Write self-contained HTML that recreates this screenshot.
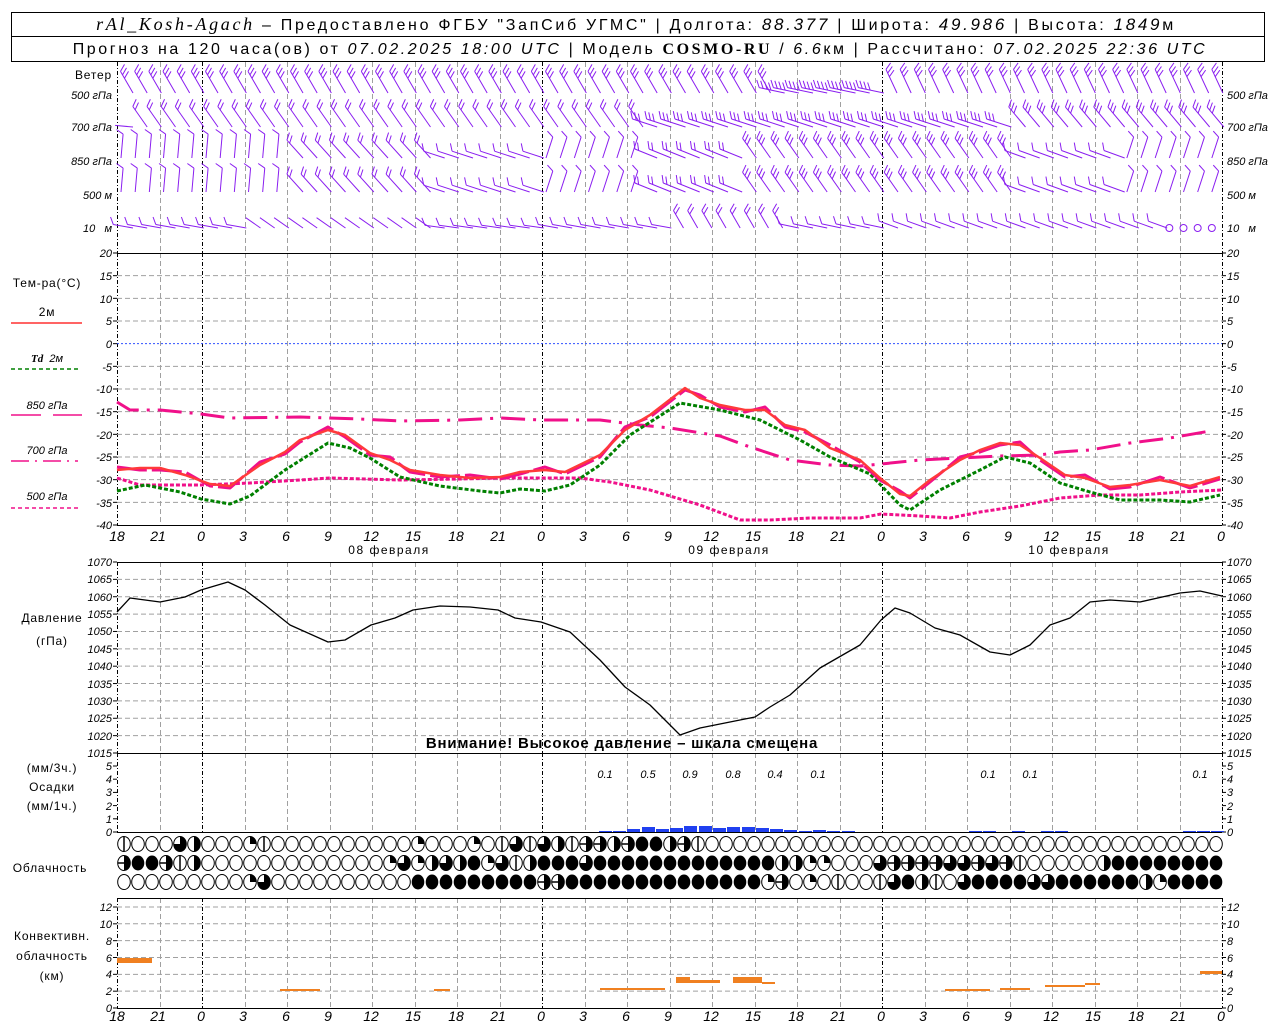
<!DOCTYPE html>
<html><head><meta charset="utf-8">
<style>
html,body{margin:0;padding:0;background:#fff;}
svg{display:block;font-family:"Liberation Sans",sans-serif;}
.t{font-size:12px;fill:#000;letter-spacing:0.8px}
.it{font-style:italic;font-size:11px;fill:#000}
.xl{font-style:italic;font-size:14px;fill:#000;text-anchor:middle}
.l{text-anchor:end}
.h{font-size:16px;fill:#000;letter-spacing:2.7px}
</style></head><body>
<svg id="s" width="1280" height="1024" viewBox="0 0 1280 1024" xmlns="http://www.w3.org/2000/svg">
<rect x="0" y="0" width="1280" height="1024" fill="#fff"/>
<g id="g"></g>
<rect x="11.5" y="12.5" width="1253" height="49" fill="none" stroke="#000"/>
<line x1="11" y1="36.5" x2="1265" y2="36.5" stroke="#000"/>
<text x="636" y="30" class="h" text-anchor="middle"><tspan font-family="Liberation Serif" font-style="italic" font-size="18">rAl_Kosh-Agach</tspan> – Предоставлено ФГБУ "ЗапСиб УГМС" | Долгота: <tspan font-style="italic" font-size="17">88.377</tspan> | Широта: <tspan font-style="italic" font-size="17">49.986</tspan> | Высота: <tspan font-style="italic" font-size="17">1849</tspan>м</text>
<text x="640" y="54" class="h" text-anchor="middle" font-size="15" style="letter-spacing:2.6px">Прогноз на 120 часа(ов) от <tspan font-style="italic">07.02.2025 18:00 UTC</tspan> | Модель <tspan font-family="Liberation Serif" font-weight="bold">COSMO-RU</tspan> / <tspan font-style="italic">6.6</tspan>км | Рассчитано: <tspan font-style="italic">07.02.2025 22:36 UTC</tspan></text>

<text x="112" y="79" class="t l">Ветер</text>
<text x="112" y="99" class="it l">500 гПа</text>
<text x="112" y="131" class="it l">700 гПа</text>
<text x="112" y="165" class="it l">850 гПа</text>
<text x="112" y="199" class="it l">500 м</text>
<text x="112" y="232" class="it l">10 &#160; м</text>
<text x="1227" y="99" class="it">500 гПа</text>
<text x="1227" y="131" class="it">700 гПа</text>
<text x="1227" y="165" class="it">850 гПа</text>
<text x="1227" y="199" class="it">500 м</text>
<text x="1227" y="232" class="it">10 &#160; м</text>

<text x="47" y="287" class="t" text-anchor="middle" font-size="13">Тем-ра(°С)</text>
<text x="47" y="316" class="t" text-anchor="middle">2м</text>
<line x1="11" y1="323" x2="82" y2="323" stroke="#ff3030" stroke-width="1.5"/>
<text x="47" y="362" class="it" text-anchor="middle"><tspan font-family="Liberation Serif" font-weight="bold">Td</tspan> &#160;2м</text>
<line x1="11" y1="369" x2="80" y2="369" stroke="#008000" stroke-width="1.5" stroke-dasharray="4,3"/>
<text x="47" y="409" class="it" text-anchor="middle">850 гПа</text>
<line x1="11" y1="415" x2="82" y2="415" stroke="#f0108a" stroke-width="1.5" stroke-dasharray="30,12"/>
<text x="47" y="454" class="it" text-anchor="middle">700 гПа</text>
<line x1="11" y1="461" x2="78" y2="461" stroke="#f0108a" stroke-width="1.5" stroke-dasharray="18,6,2,6"/>
<text x="47" y="500" class="it" text-anchor="middle">500 гПа</text>
<line x1="11" y1="508" x2="78" y2="508" stroke="#f0108a" stroke-width="1.5" stroke-dasharray="4,3"/>

<g class="it">
<text x="112" y="257" class="l">20</text><text x="112" y="280" class="l">15</text><text x="112" y="303" class="l">10</text><text x="112" y="325" class="l">5</text><text x="112" y="348" class="l">0</text><text x="112" y="371" class="l">-5</text><text x="112" y="393" class="l">-10</text><text x="112" y="416" class="l">-15</text><text x="112" y="439" class="l">-20</text><text x="112" y="461" class="l">-25</text><text x="112" y="484" class="l">-30</text><text x="112" y="507" class="l">-35</text><text x="112" y="529" class="l">-40</text>
<text x="1227" y="257">20</text><text x="1227" y="280">15</text><text x="1227" y="303">10</text><text x="1227" y="325">5</text><text x="1227" y="348">0</text><text x="1227" y="371">-5</text><text x="1227" y="393">-10</text><text x="1227" y="416">-15</text><text x="1227" y="439">-20</text><text x="1227" y="461">-25</text><text x="1227" y="484">-30</text><text x="1227" y="507">-35</text><text x="1227" y="529">-40</text>
</g>
<g class="xl">
<text x="117" y="541">18</text><text x="158" y="541">21</text><text x="201" y="541">0</text><text x="243" y="541">3</text><text x="286" y="541">6</text><text x="328" y="541">9</text><text x="371" y="541">12</text><text x="413" y="541">15</text><text x="456" y="541">18</text><text x="498" y="541">21</text><text x="541" y="541">0</text><text x="583" y="541">3</text><text x="626" y="541">6</text><text x="668" y="541">9</text><text x="711" y="541">12</text><text x="753" y="541">15</text><text x="796" y="541">18</text><text x="838" y="541">21</text><text x="881" y="541">0</text><text x="923" y="541">3</text><text x="966" y="541">6</text><text x="1008" y="541">9</text><text x="1051" y="541">12</text><text x="1093" y="541">15</text><text x="1136" y="541">18</text><text x="1178" y="541">21</text><text x="1221" y="541">0</text>
</g>
<text x="389" y="554" class="t" text-anchor="middle" style="letter-spacing:1.5px">08 февраля</text>
<text x="729" y="554" class="t" text-anchor="middle" style="letter-spacing:1.5px">09 февраля</text>
<text x="1069" y="554" class="t" text-anchor="middle" style="letter-spacing:1.5px">10 февраля</text>

<text x="52" y="622" class="t" text-anchor="middle">Давление</text>
<text x="52" y="645" class="t" text-anchor="middle">(гПа)</text>
<g class="it" font-size="10">
<text x="112" y="566" class="l">1070</text><text x="112" y="583" class="l">1065</text><text x="112" y="601" class="l">1060</text><text x="112" y="618" class="l">1055</text><text x="112" y="635" class="l">1050</text><text x="112" y="653" class="l">1045</text><text x="112" y="670" class="l">1040</text><text x="112" y="688" class="l">1035</text><text x="112" y="705" class="l">1030</text><text x="112" y="722" class="l">1025</text><text x="112" y="740" class="l">1020</text><text x="112" y="757" class="l">1015</text>
<text x="1227" y="566">1070</text><text x="1227" y="583">1065</text><text x="1227" y="601">1060</text><text x="1227" y="618">1055</text><text x="1227" y="635">1050</text><text x="1227" y="653">1045</text><text x="1227" y="670">1040</text><text x="1227" y="688">1035</text><text x="1227" y="705">1030</text><text x="1227" y="722">1025</text><text x="1227" y="740">1020</text><text x="1227" y="757">1015</text>
</g>
<text x="622" y="748" font-size="15" font-weight="bold" text-anchor="middle" fill="#000" style="letter-spacing:0.8px">Внимание! Высокое давление – шкала смещена</text>

<text x="52" y="772" class="t" text-anchor="middle">(мм/3ч.)</text>
<text x="52" y="791" class="t" text-anchor="middle">Осадки</text>
<text x="52" y="810" class="t" text-anchor="middle">(мм/1ч.)</text>
<g class="it" font-size="10">
<text x="112" y="770" class="l">5</text><text x="112" y="783" class="l">4</text><text x="112" y="796" class="l">3</text><text x="112" y="810" class="l">2</text><text x="112" y="823" class="l">1</text><text x="112" y="836" class="l">0</text>
<text x="1227" y="770">5</text><text x="1227" y="783">4</text><text x="1227" y="796">3</text><text x="1227" y="810">2</text><text x="1227" y="823">1</text><text x="1227" y="836">0</text>
</g>
<g class="it" font-size="13" text-anchor="middle">
<text x="605" y="778">0.1</text><text x="648" y="778">0.5</text><text x="690" y="778">0.9</text><text x="733" y="778">0.8</text><text x="775" y="778">0.4</text><text x="818" y="778">0.1</text><text x="988" y="778">0.1</text><text x="1030" y="778">0.1</text><text x="1200" y="778">0.1</text>
</g>
<text x="50" y="872" class="t" text-anchor="middle">Облачность</text>

<text x="52" y="940" class="t" text-anchor="middle">Конвективн.</text>
<text x="52" y="960" class="t" text-anchor="middle">облачность</text>
<text x="52" y="980" class="t" text-anchor="middle">(км)</text>
<g class="it" font-size="10">
<text x="112" y="911" class="l">12</text><text x="112" y="928" class="l">10</text><text x="112" y="945" class="l">8</text><text x="112" y="962" class="l">6</text><text x="112" y="978" class="l">4</text><text x="112" y="995" class="l">2</text><text x="112" y="1012" class="l">0</text>
<text x="1227" y="911">12</text><text x="1227" y="928">10</text><text x="1227" y="945">8</text><text x="1227" y="962">6</text><text x="1227" y="978">4</text><text x="1227" y="995">2</text><text x="1227" y="1012">0</text>
</g>
<g class="xl">
<text x="117" y="1021">18</text><text x="158" y="1021">21</text><text x="201" y="1021">0</text><text x="243" y="1021">3</text><text x="286" y="1021">6</text><text x="328" y="1021">9</text><text x="371" y="1021">12</text><text x="413" y="1021">15</text><text x="456" y="1021">18</text><text x="498" y="1021">21</text><text x="541" y="1021">0</text><text x="583" y="1021">3</text><text x="626" y="1021">6</text><text x="668" y="1021">9</text><text x="711" y="1021">12</text><text x="753" y="1021">15</text><text x="796" y="1021">18</text><text x="838" y="1021">21</text><text x="881" y="1021">0</text><text x="923" y="1021">3</text><text x="966" y="1021">6</text><text x="1008" y="1021">9</text><text x="1051" y="1021">12</text><text x="1093" y="1021">15</text><text x="1136" y="1021">18</text><text x="1178" y="1021">21</text><text x="1221" y="1021">0</text>
</g>
</svg>
<script>
(function(){
var NS="http://www.w3.org/2000/svg",g=document.getElementById("g");
function el(n,a){var e=document.createElementNS(NS,n);for(var k in a)e.setAttribute(k,a[k]);g.appendChild(e);return e;}
function line(x1,y1,x2,y2,c,w,d){var a={x1:x1,y1:y1,x2:x2,y2:y2,stroke:c,"stroke-width":w||1};if(d)a["stroke-dasharray"]=d;return el("line",a);}
var X0=117,X1=1222,DX=(X1-X0)/78;
function X(h){return X0+h*DX;}
var panels=[[62,253],[253,525],[562,753],[753,832],[898,1008]];
for(var i=0;i<=26;i++){var x=Math.round(X(i*3))+0.5;var day=(i%8==2)||i==0||i==26;
 panels.forEach(function(p){line(x,p[0],x,p[1],day?"#000":"#a0a0a0",1,day?"4,2,1,2":"5,3");});}
for(var v=15;v>=-35;v-=5){var y=253+(20-v)*4.533;line(117,y,1222,y,v==0?"#3050ff":"#a0a0a0",1,v==0?"2,2":"5,3");}
for(var v=1065;v>=1020;v-=5){var y=562+(1070-v)*3.4727;line(117,y,1222,y,"#a0a0a0",1,"5,3");}
for(var v=2;v<=12;v+=2){var y=1008-v*8.42;line(117,y,1222,y,"#a0a0a0",1,"5,3");}
function ticks(y0,y1,n){for(var i=0;i<=n;i++){var y=y0+(y1-y0)*i/n;line(113,y,117,y,"#000");line(1222,y,1226,y,"#000");}}
ticks(253,525,12);ticks(562,753,11);ticks(766,832,5);ticks(907,1008,6);
[253.5,525.5,562.5,753.5,832.5,898.5,1008.5].forEach(function(y){line(117,y,1222,y,"#000",1);});
function poly(pts,c,w,d){var a={points:pts.map(function(p){return p.join(",")}).join(" "),fill:"none",stroke:c,"stroke-width":w,"stroke-linejoin":"round"};if(d)a["stroke-dasharray"]=d;return el("polyline",a);}
var red=[[117,470],[140,468],[160,468],[185,475],[210,484],[230,486],[260,465],[285,452],[300,440],[328,430],[345,435],[370,453],[390,460],[410,470],[440,475],[470,478],[500,477],[520,472],[545,470],[565,472],[600,455],[625,430],[650,415],[685,388],[700,398],[720,405],[745,410],[765,410],[785,425],[805,430],[830,448],[860,460],[880,478],[900,494],[910,496],[930,480],[960,460],[980,450],[1000,443],[1020,445],[1040,458],[1065,475],[1085,478],[1110,487],[1130,485],[1160,480],[1190,486],[1220,477]];
var p700=red.map(function(p,i){return [p[0],p[1]+(i%3==0?-3:2)];});
poly([[117,402],[130,410],[160,410],[201,414],[230,418],[300,417],[360,419],[400,421],[460,420],[500,418],[541,420],[600,420],[640,425],[670,428],[720,436],[750,447],[790,460],[830,465],[860,466],[881,464],[920,460],[960,458],[1000,456],[1040,455],[1060,452],[1090,450],[1130,443],[1170,438],[1210,431]],"#f0108a",3,"24,8,3,8");
poly([[117,478],[140,485],[201,485],[250,483],[300,480],[330,478],[400,480],[460,479],[500,478],[541,478],[580,478],[610,482],[650,490],[700,505],[740,520],[770,520],[810,518],[860,518],[881,514],[920,516],[950,518],[980,512],[1020,506],[1060,498],[1100,495],[1140,495],[1180,492],[1222,490]],"#f0108a",3,"4,2");
poly([[117,491],[145,485],[180,492],[201,499],[230,504],[250,496],[285,470],[328,443],[350,448],[370,458],[400,477],[440,486],[480,491],[500,493],[520,489],[545,491],[570,485],[600,465],[630,435],[680,403],[720,410],[760,420],[800,440],[830,457],[870,474],[900,505],[910,510],[940,490],[980,470],[1005,457],[1030,463],[1060,483],[1090,492],[1120,500],[1160,500],[1190,502],[1220,495]],"#008000",3,"4,2");
poly(p700,"#f0108a",3,"30,5");
poly(red,"#ff3a3a",2.5);
poly([[117,612],[130,598],[160,602],[185,597],[201,590],[228,582],[245,590],[265,605],[290,625],[328,642],[345,640],[371,625],[395,618],[413,610],[440,606],[470,607],[498,610],[515,618],[541,622],[570,632],[600,660],[625,687],[650,705],[680,735],[700,728],[740,720],[755,717],[770,707],[790,695],[820,668],[860,645],[881,620],[895,608],[910,613],[935,628],[960,635],[990,652],[1010,655],[1030,645],[1050,625],[1070,618],[1090,602],[1110,600],[1140,602],[1180,593],[1200,591],[1222,596]],"#000",1.3);
[[599,1],[613,1],[627,3],[642,5],[656,3],[670,4],[684,6],[699,6],[713,4],[727,5],[742,5],[756,4],[770,3],[784,2],[799,1],[813,2],[827,1],[842,1],[969,1],[983,1],[1012,1],[1041,1],[1055,1],[1183,1],[1197,1],[1211,1]].forEach(function(b){el("rect",{x:b[0],y:832-b[1],width:13,height:b[1],fill:"#2040f0"});});
[[117,152,958,5],[280,320,989,2],[434,450,989,2],[600,665,988,2],[676,690,977,6],[690,720,980,3],[733,762,977,6],[762,775,982,2],[945,990,989,2],[1000,1030,988,2],[1045,1085,985,2],[1085,1100,983,2],[1200,1222,971,3]].forEach(function(b){el("rect",{x:b[0],y:b[2],width:b[1]-b[0],height:b[3],fill:"#f08020"});});
var r1="v000320001v0000000000100010v3v32vhh2h442hv00000000000000000000000000000000000000";
var r2="h44hv20000000000000131232413v24443444444444444422110003hhhh33h3hv0000024444444444";
var r3="000000000130000000000444444444hh444444444444441h010v00v342v03444433444444214444444";
[[r1,844],[r2,863],[r3,882]].forEach(function(rr){var s=rr[0];for(var i=0;i<79;i++){var c=s[i]||"0";var cx=X0+7+i*14.0,cy=rr[1];
 var rx=6.3,ry=7.5;
 if(c=="4")el("ellipse",{cx:cx,cy:cy,rx:rx,ry:ry,fill:"#000"});
 else{el("ellipse",{cx:cx,cy:cy,rx:rx,ry:ry,fill:"#fff",stroke:"#000","stroke-width":1});
  if(c=="1")el("path",{d:"M"+cx+","+cy+"V"+(cy-ry)+"A"+rx+","+ry+" 0 0 1 "+(cx+rx)+","+cy+"Z",fill:"#000"});
  if(c=="2")el("path",{d:"M"+cx+","+(cy-ry)+"A"+rx+","+ry+" 0 0 1 "+cx+","+(cy+ry)+"Z",fill:"#000"});
  if(c=="3")el("path",{d:"M"+cx+","+cy+"V"+(cy-ry)+"A"+rx+","+ry+" 0 1 1 "+(cx-rx)+","+cy+"Z",fill:"#000"});
  if(c=="v")line(cx,cy-ry,cx,cy+ry,"#000",1.5);
  if(c=="h"){line(cx-rx,cy,cx+rx,cy,"#000",1.5);el("path",{d:"M"+cx+","+(cy-ry)+"A"+rx+","+ry+" 0 0 1 "+cx+","+(cy+ry)+"Z",fill:"#000"});}
 }}});
var P="#8a1ef0";
function ang(segs,x){for(var i=0;i<segs.length;i++)if(x<segs[i][0])return segs[i];return segs[segs.length-1];}
var rows=[
 [93,[[760,-30,25,3],[880,-78,26,4],[1230,-25,26,3]]],
 [127,[[130,-85,18,0],[640,-35,25,2],[1000,-72,26,3],[1230,-40,26,3]]],
 [158,[[285,5,24,1],[420,-42,24,2],[540,-72,22,1],[645,18,22,1],[740,-68,24,2],[1000,-35,24,3],[1120,-70,22,1],[1230,18,22,1]]],
 [192,[[285,5,24,1],[420,-42,24,2],[540,-72,22,1],[645,18,22,1],[740,-68,24,2],[1000,-35,24,3],[1120,-70,22,1],[1230,18,22,1]]],
 [228,[[235,-80,20,1],[420,-55,18,0],[540,-82,20,1],[660,-80,20,1],[780,-30,20,2],[880,-78,20,1],[1160,-70,20,1],[1230,0,0,0]]]
];
var c60=Math.cos(Math.PI/3),s60=Math.sin(Math.PI/3);
rows.forEach(function(r){var y=r[0];for(var i=0;i<78;i++){var x=X0+4+i*DX;var a=ang(r[1],x);
 if(a[2]==0){el("circle",{cx:x,cy:y,r:3.5,fill:"none",stroke:P});continue;}
 var t=a[1]*Math.PI/180,L=a[2];var dx=Math.sin(t),dy=-Math.cos(t);
 var bx=x+(dx<0?Math.min(-dx*L,12):0),by=y;
 var tx=bx+dx*L,ty=by+dy*L;line(bx,by,tx,ty,P,1);
 var fx=dx*c60-dy*s60,fy=dx*s60+dy*c60;
 if(a[1]>=0){fx=dx*c60+dy*s60;fy=-dx*s60+dy*c60;}
 for(var k=0;k<a[3];k++){var sx=tx-dx*k*4,sy=ty-dy*k*4;
  line(sx,sy,sx+fx*8,sy+fy*8,P,1);}
 }});
})();
</script>
</body></html>
